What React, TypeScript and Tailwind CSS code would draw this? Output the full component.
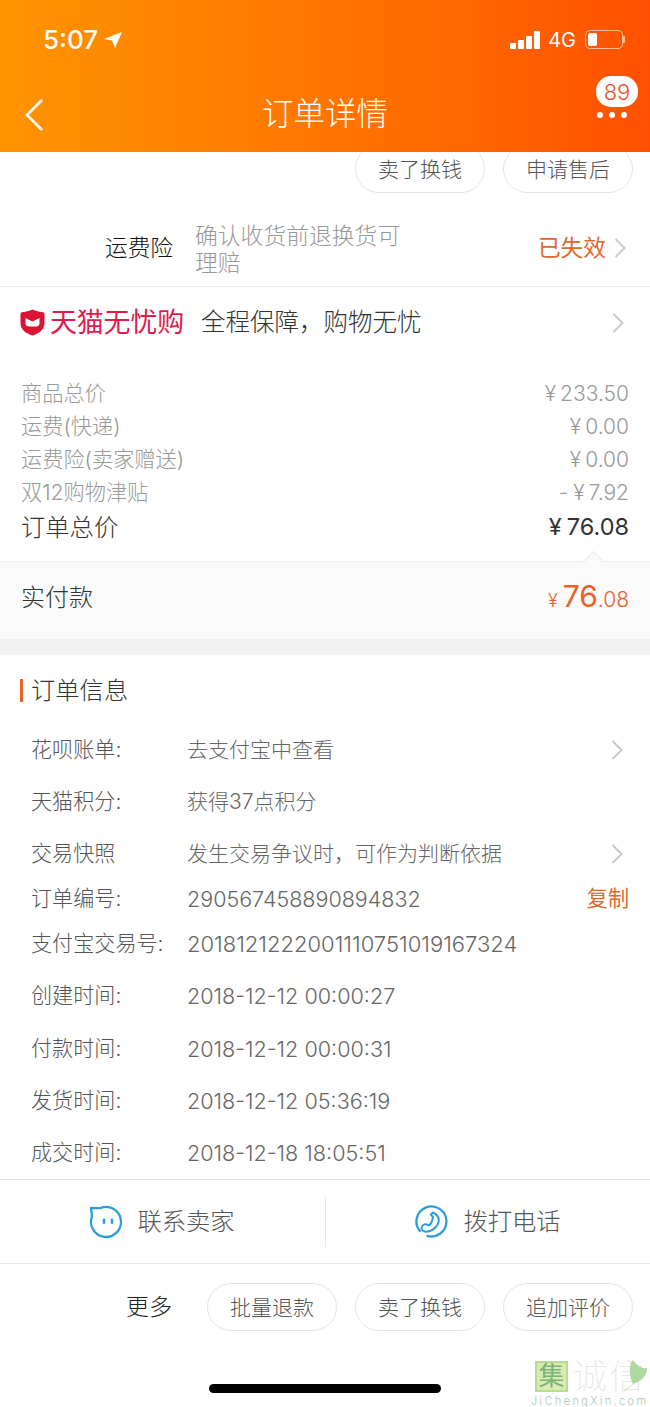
const FONT = "font-['Inter','Noto_Sans_CJK_SC',sans-serif]";

const priceRows = [
  { label: "商品总价", value: "233.50", sign: "" },
  { label: "运费(快递)", value: "0.00", sign: "" },
  { label: "运费险(卖家赠送)", value: "0.00", sign: "" },
  { label: "双12购物津贴", value: "7.92", sign: "-" },
];

const infoRows = [
  { label: "花呗账单:", value: "去支付宝中查看", height: "h-[52px]", size: "text-[21px]", arrow: true },
  { label: "天猫积分:", value: "获得37点积分", height: "h-[52px]", size: "text-[21px]" },
  { label: "交易快照", value: "发生交易争议时，可作为判断依据", height: "h-[52px]", size: "text-[21px]", arrow: true },
  { label: "订单编号:", value: "290567458890894832", height: "h-[38px]", size: "text-[21.5px]", copy: true },
  { label: "支付宝交易号:", value: "2018121222001110751019167324", height: "h-[52px]", size: "text-[22px]" },
  { label: "创建时间:", value: "2018-12-12 00:00:27", height: "h-[52.5px]", size: "text-[21.6px]" },
  { label: "付款时间:", value: "2018-12-12 00:00:31", height: "h-[52.5px]", size: "text-[21.6px]" },
  { label: "发货时间:", value: "2018-12-12 05:36:19", height: "h-[52.5px]", size: "text-[21.6px]" },
  { label: "成交时间:", value: "2018-12-18 18:05:51", height: "h-[51.5px]", size: "text-[21.6px]" },
];

const Pill = ({ text }: { text: string }) => (
  <div className="w-[130px] h-[48px] pt-[1px] shrink-0 rounded-[24px] border border-[#e4e4e4] bg-white flex items-center justify-center text-[21px] font-light text-[#555]">
    {text}
  </div>
);

const Arrow = () => (
  <svg width="12" height="20" viewBox="0 0 12 20" fill="none" stroke="#c9c9c9" strokeWidth="2">
    <path d="M1.5 1 L10.5 10 L1.5 19" />
  </svg>
);

const StatusBar = () => (
  <div className="h-[79px] pl-[43px] pr-[25px] flex items-center justify-between text-white">
    <div className="flex items-center gap-[6px]">
      <span className="text-[26px] font-medium leading-none">5:07</span>
      <svg width="18" height="16" viewBox="0 0 18 16" fill="white">
        <path d="M18 0 L0 7 L8 8.5 L11 16 Z" />
      </svg>
    </div>
    <div className="flex items-center">
      <div className="flex items-end gap-[2px] h-[18px]">
        <div className="w-[6px] h-[6px] bg-white rounded-[1px]" />
        <div className="w-[6px] h-[9px] bg-white rounded-[1px]" />
        <div className="w-[6px] h-[13px] bg-white rounded-[1px]" />
        <div className="w-[6px] h-[18px] bg-white rounded-[1px]" />
      </div>
      <span className="ml-[8px] text-[20px] leading-none">4G</span>
      <div className="ml-[9px] flex items-center">
        <div className="w-[38px] h-[19px] rounded-[5px] border border-white/60 p-[2px]">
          <div className="w-[9px] h-full bg-white rounded-[2px]" />
        </div>
        <div className="w-[2px] h-[7px] bg-white/60 rounded-r-[1px]" />
      </div>
    </div>
  </div>
);

const NavBar = () => (
  <div className="relative h-[73px] flex items-center justify-center">
    <svg className="absolute left-[24px] top-[19px]" width="20" height="34" viewBox="0 0 20 34" fill="none" stroke="white" strokeWidth="2.6">
      <path d="M18 2 L3 17 L18 32" />
    </svg>
    <span className="text-[31.5px] font-light text-white leading-none mt-[-4px]">订单详情</span>
    <div className="absolute right-[12px] top-[-3px] w-[42px] h-[31px] rounded-[15px] bg-white flex items-center justify-center text-[22px] font-light leading-none text-[#e2552a]">
      89
    </div>
    <div className="absolute right-[23px] top-[33px] flex gap-[6px]">
      <div className="w-[6px] h-[6px] rounded-full bg-white" />
      <div className="w-[6px] h-[6px] rounded-full bg-white" />
      <div className="w-[6px] h-[6px] rounded-full bg-white" />
    </div>
  </div>
);

const TmallShield = () => (
  <svg width="25" height="27" viewBox="0 0 25 27">
    <path d="M12.5 0.5 C16 2 19 3 22 3 C23.8 3 24.5 4 24.5 5.5 V14 C24.5 20.5 19 24.5 12.5 26.5 C6 24.5 0.5 20.5 0.5 14 V5.5 C0.5 4 1.2 3 3 3 C6 3 9 2 12.5 0.5 Z" fill="#dc1237" />
    <path d="M5.5 9 L12.5 12.5 L19.5 9 V14.5 C19.5 16.5 18 17.5 16 17.5 H9 C7 17.5 5.5 16.5 5.5 14.5 Z" fill="white" />
  </svg>
);

const ChatIcon = () => (
  <svg width="35" height="34" viewBox="0 0 35 34" fill="none" stroke="#2c9fd9" strokeWidth="2.3">
    <path d="M3 3 L12 3.2 A15 15 0 1 1 4 11.5 Z" strokeLinejoin="round" />
    <rect x="14.7" y="13.5" width="2.6" height="5.5" rx="1.3" fill="#2c9fd9" stroke="none" />
    <rect x="22.7" y="13.5" width="2.6" height="5.5" rx="1.3" fill="#2c9fd9" stroke="none" />
  </svg>
);

const PhoneIcon = () => (
  <svg width="33" height="33" viewBox="0 0 33 33" fill="none" stroke="#2c9fd9" strokeWidth="2.3">
    <path d="M5.5 26.7 A15 15 0 1 1 11.5 30.6" />
    <path d="M18 7.5 C22 9.5 24 12.5 23.8 15.5 C23.5 21 17 27 10.5 26.8 C7.5 26.5 6 24.5 6.8 22 C7.5 19.5 11 18 13.8 20.5 C16 19 17.5 15.5 18 12 L15.8 9.5 Z" strokeWidth="2" strokeLinejoin="round" />
  </svg>
);

// Site stamp in the bottom corner
const SiteStamp = () => (
  <div className="absolute right-0 bottom-0 w-[119px] flex flex-col">
    <div className="relative flex items-center h-[32px] pl-[4px]">
      <div className="w-[33px] h-[31px] bg-[#d8ebb0] border-[2px] border-[#bcdb92] flex items-center justify-center text-[26px] leading-none text-[#7eb37c]">
        集
      </div>
      <span className="ml-[4px] text-[35px] leading-[32px] font-thin text-[#e6e6e6] whitespace-nowrap tracking-[2px]">诚信</span>
      <svg className="absolute right-[2px] top-0" width="24" height="32" viewBox="0 0 24 32">
        <path d="M8 0 C14 4 15 9 23 8 C24 16 16 22 9 24 C5 17 5 6 8 0 Z" fill="#b0d9a0" />
        <path d="M0 31 C4 28 7 26 10 23" stroke="#c4e0b6" strokeWidth="1" fill="none" />
      </svg>
    </div>
    <span className="mt-[4px] text-[11px] font-light leading-none tracking-[2.35px] text-[#adc6b6] whitespace-nowrap">JiChengXin.com</span>
  </div>
);

export default function App() {
  return (
    <div className={`relative w-[650px] h-[1407px] overflow-hidden bg-white ${FONT}`}>
      <header className="h-[152px] bg-gradient-to-r from-[#ff9400] to-[#ff5000]">
        <StatusBar />
        <NavBar />
      </header>

      <div className="h-[41px] flex items-end justify-end gap-[18px] pr-[17px] overflow-hidden">
        <Pill text="卖了换钱" />
        <Pill text="申请售后" />
      </div>

      <div className="h-[94px] pt-[18px] border-b border-[#eeeeee] flex items-center pl-[105px] pr-[24px]">
        <span className="w-[90px] text-[22.7px] font-light text-[#111]">运费险</span>
        <span className="w-[212px] text-[22.8px] font-light leading-[27px] text-[#999]">确认收货前退换货可理赔</span>
        <div className="ml-auto flex items-center gap-[8px]">
          <span className="text-[22.7px] text-[#e0682c]">已失效</span>
          <Arrow />
        </div>
      </div>

      <div className="h-[71px] flex items-center pl-[20px] pr-[26px]">
        <TmallShield />
        <span className="ml-[5px] text-[27px] leading-none text-[#df1c4d] tracking-[-0.2px]">天猫无忧购</span>
        <span className="ml-[17px] text-[24.5px] font-light text-[#333]">全程保障，购物无忧</span>
        <div className="ml-auto">
          <Arrow />
        </div>
      </div>

      <div className="mt-[19px] px-[21px]">
        {priceRows.map((row) => (
          <div key={row.label} className="h-[33px] flex items-center justify-between text-[#999] text-[21.2px] font-light">
            <span>{row.label}</span>
            <span className="flex items-center text-[21px]">
              {row.sign && <span className="mr-[5px]">{row.sign}</span>}
              <span className="mr-[4px]">¥</span>
              {row.value}
            </span>
          </div>
        ))}
        <div className="h-[36px] flex items-center justify-between text-[#333]">
          <span className="text-[24.3px] font-light">订单总价</span>
          <span className="flex items-center text-[23.5px]">
            <span className="mr-[5px]">¥</span>76.08
          </span>
        </div>
      </div>

      <div className="relative mt-[16px] h-[78px] pb-[6px] px-[21px] bg-[#fafafa] border-t border-[#f0f0f0] flex items-center justify-between">
        <div className="absolute right-[49px] top-[-8px] w-[15px] h-[15px] rotate-45 bg-[#fafafa] border-l border-t border-[#e8e8e8]" />
        <span className="text-[24px] font-light text-[#333]">实付款</span>
        <div className="flex items-baseline text-[#e8622a] font-light">
          <span className="text-[18px] mr-[5px]">¥</span>
          <span className="text-[30px] leading-none font-normal">76</span>
          <span className="text-[21px] leading-none">.08</span>
        </div>
      </div>

      <div className="h-[16px] bg-[#f2f2f2]" />

      <div className="h-[69px] pt-[2px] pl-[20px] flex items-center">
        <div className="w-[3px] h-[23px] bg-[#e0682c]" />
        <span className="ml-[8px] text-[24.3px] font-light text-[#333]">订单信息</span>
      </div>

      <div className="pl-[31px] pr-[21px]">
        {infoRows.map((row) => (
          <div key={row.label} className={`${row.height} flex items-center text-[21.1px] font-light text-[#555]`}>
            <span className="w-[156px] shrink-0 whitespace-nowrap">{row.label}</span>
            <span className={`${row.size} whitespace-nowrap text-[#666]`}>{row.value}</span>
            {row.arrow && (
              <div className="ml-auto mr-[6px]">
                <Arrow />
              </div>
            )}
            {row.copy && <span className="ml-auto font-normal text-[#e0682c]">复制</span>}
          </div>
        ))}
      </div>

      <div className="h-[85px] border-y border-[#e8e8e8] flex items-center">
        <div className="w-[326px] h-[50px] border-r border-[#e8e8e8] flex items-center justify-center gap-[14px] pr-[2px]">
          <ChatIcon />
          <span className="text-[24.3px] font-light text-[#555]">联系卖家</span>
        </div>
        <div className="flex-1 h-[50px] flex items-center justify-center gap-[15px]">
          <PhoneIcon />
          <span className="text-[24.3px] font-light text-[#555]">拨打电话</span>
        </div>
      </div>

      <div className="mt-[19px] flex items-center justify-end gap-[18px] pr-[17px]">
        <span className="mr-[17px] text-[23px] font-light text-[#222]">更多</span>
        <Pill text="批量退款" />
        <Pill text="卖了换钱" />
        <Pill text="追加评价" />
      </div>

      <div className="absolute left-[209px] bottom-[14px] w-[232px] h-[9px] rounded-full bg-black" />
      <SiteStamp />
    </div>
  );
}
